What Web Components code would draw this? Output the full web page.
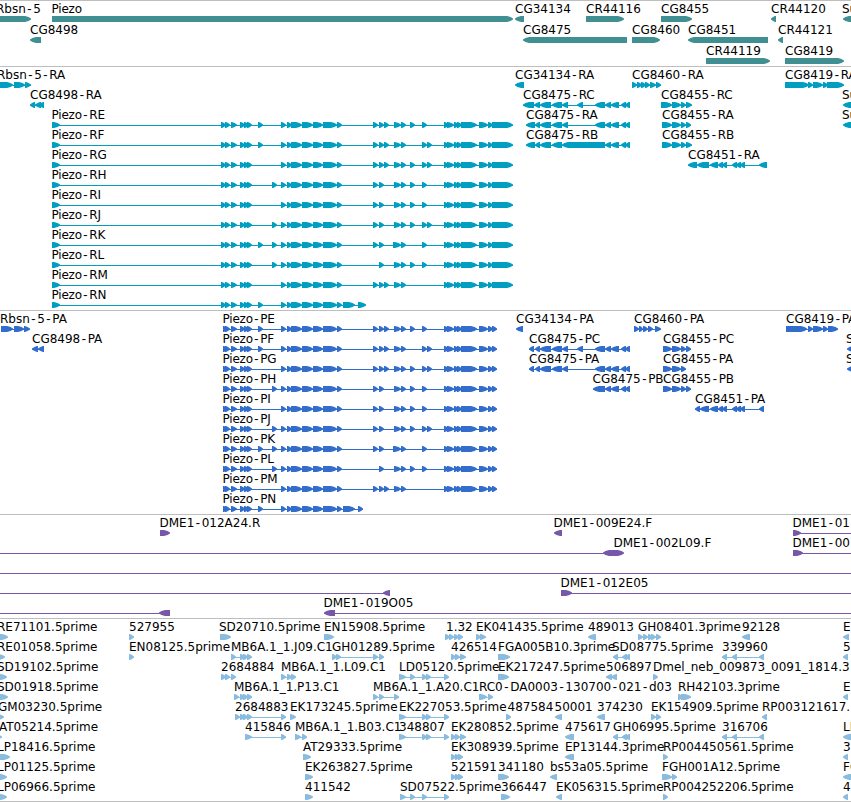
<!DOCTYPE html>
<html lang="en">
<head>
<meta charset="utf-8">
<title>Piezo region</title>
<style>
    body {
        margin: 0;
        background: #fff;
        color: #000;
        font-family: "DejaVu Sans", sans-serif;
        font-size: 12px;
    }
</style>
</head>
<body>
<genome-browser></genome-browser>

<script>
// Feature format: "label|x|strand exon exon ..."
// A strand of "-" draws the arrows to the left. "a~b" is a connector without an exon.

// Piezo isoforms share most exons, only the optional ones differ
const PIEZO_OPTIONAL = {
    E: '258-263 373-378 379-384 384-389 394-401 401-406 410-415 422-427',
    F: '258-263 373-378 379-384 384-389 394-401 401-406 422-427 427-432',
    G: '373-378 379-384 384-389 394-401 401-406 410-415 422-427 427-432',
    H: '272-277 373-378 379-384 394-401 401-406 410-415 422-427',
    I: '373-378 379-384 394-401 401-406 410-415 422-427',
    J: '272-277 373-378 379-384 394-401 401-406 410-415 422-427 427-432',
    K: '258-263 272-277 373-378 379-384 393-401 401-406 422-427',
    L: '272-277 379-384 394-401 401-406 410-415 422-427',
    M: '373-378 379-384 384-389 394-401 401-406',
    N: '258-263'
};

function piezo(kind, letter) {
    const first = kind === 'R' ? '52-60 221-226' : '223-228';
    const start = '225-230 231-237 240-245 244-249 247-252';
    const middle = '281-286 287-292 291-302 302-313 313-323 323-337 337-342';
    let end = '444-449 447-454 454-459 457-462 461-477 479-488 488-493 ' + (kind === 'R' ? '492-513' : '492-497');
    if (letter === 'N') {
        end = kind === 'R' ? '343-355 358-366' : '343-355 358-363';
    }
    return `Piezo-${kind}${letter}|${kind === 'R' ? 51.5 : 222.5}|+ ${first} ${start} ${middle} ${PIEZO_OPTIONAL[letter]} ${end}`;
}

const CG8475_LEFT = '540-551 552-562 562-568';
const CG8475_RIGHT = '605-611 611-619 621-626 625-630';
const CG8455 = '672-681 681-686';
const CG8451 = '710-718 718-723 722-727 732-737 736-741 740-745';

const TRACKS = [
    {
        color: '#3f8f93', rowHeight: 21, pad: 2,
        rows: [
            ['Rbsn-5|-4|+ -9-31', 'Piezo|51.5|+ 52-513', 'CG34134|515|- 515-524', 'CR44116|586|+ 586-624', 'CG8455|661|+ 661-692', 'CR44120|771|- 771-776', 'Su|842|- 843-865'],
            ['CG8498|30|- 30-41', 'CG8475|523|- 523-627', 'CG8460|632|+ 632-660', 'CG8451|688|- 688-768', 'CR44121|778|- 778-783'],
            ['CR44119|706|+ 706-770', 'CG8419|785|+ 785-844']
        ]
    },
    {
        color: '#009fc2', rowHeight: 20, pad: 3,
        rows: [
            ['Rbsn-5-RA|-3|+ -9-13 14-25 25-31', 'CG34134-RA|515|- 515-524', 'CG8460-RA|632|+ 632-637 637-642 641-646 645-650 650-656 656-661', 'CG8419-RA|785|+ 785-809 808-813 813-823 823-828 827-844'],
            ['CG8498-RA|30|- 30-35 35-41 39-44', `CG8475-RC|523|- 523-534 534-540 ${CG8475_LEFT} 577-583 595-605 ${CG8475_RIGHT}`, `CG8455-RC|661|+ 661-672 ${CG8455} 686-692`, 'Su|842|- 843-865'],
            [piezo('R', 'E'), `CG8475-RA|526|- 526-535 535-540 ${CG8475_LEFT} 595-605 ${CG8475_RIGHT}`, `CG8455-RA|662|+ 662-672 ${CG8455} 686-691`, 'Su|842|- 843-865'],
            [piezo('R', 'F'), `CG8475-RB|526|- 526-535 535-540 540-551 552-562 562-605 ${CG8475_RIGHT}`, `CG8455-RB|662|+ 662-672 ${CG8455} 686-692`],
            [piezo('R', 'G'), `CG8451-RA|688|- 688-697 697-709 ${CG8451} 759-767`],
            [piezo('R', 'H')],
            [piezo('R', 'I')],
            [piezo('R', 'J')],
            [piezo('R', 'K')],
            [piezo('R', 'L')],
            [piezo('R', 'M')],
            [piezo('R', 'N')]
        ]
    },
    {
        color: '#326dcb', rowHeight: 20, pad: 3,
        rows: [
            ['Rbsn-5-PA|0|+ 1-13 14-24 24-30', piezo('P', 'E'), 'CG34134-PA|516|- 516-523', 'CG8460-PA|634|+ 634-639 639-643 643-648 648-653 655-661', 'CG8419-PA|786|+ 786-807 808-813 813-823 823-828 828-838'],
            ['CG8498-PA|32|- 32-38 38-44', piezo('P', 'F'), `CG8475-PC|529|- 529-534 535-540 ${CG8475_LEFT} 577-583 595-605 ${CG8475_RIGHT}`, `CG8455-PC|663|+ 663-672 ${CG8455} 686-691`, 'S|846|- 847-865'],
            [piezo('P', 'G'), `CG8475-PA|529|- 529-534 535-540 ${CG8475_LEFT} 595-605 ${CG8475_RIGHT}`, `CG8455-PA|663|+ 663-672 ${CG8455}`, 'S|846|- 847-865'],
            [piezo('P', 'H'), `CG8475-PB|592.5|- 593-605 ${CG8475_RIGHT}`, `CG8455-PB|663|+ 663-672 ${CG8455} 686-691`],
            [piezo('P', 'I'), `CG8451-PA|695|- 695-700 700-709 ${CG8451} 759-764`],
            [piezo('P', 'J')],
            [piezo('P', 'K')],
            [piezo('P', 'L')],
            [piezo('P', 'M')],
            [piezo('P', 'N')]
        ]
    },
    {
        color: '#7758a8', rowHeight: 20, pad: 3,
        rows: [
            ['DME1-012A24.R|159.5|+ 160-170', 'DME1-009E24.F|553.5|- 554-562', 'DME1-01|792.5|+ 793-801 801~851'],
            ['|0|- 0~603 603-614', 'DME1-002L09.F|613.5|+ 612-624', 'DME1-00|792.5|+ 793-803 803~851'],
            ['|0|+ 0~851'],
            ['|0|- 0~390 383-390', 'DME1-012E05|560.5|+ 561-572 572~851'],
            ['|0|- 0~170 159-170', 'DME1-019O05|323.5|- 324-335 335~851']
        ]
    },
    {
        color: '#89bcde', rowHeight: 20, pad: 2,
        rows: [
            ['RE71101.5prime|-3|+ -9-8', '527955|129|+ 129-134', 'SD20710.5prime|219|+ 220-231', 'EN15908.5prime|324|+ 324-334', '1.32|446|+ 445-450 449-454 454-459 458-463', 'EK041435.5prime|476|+ 476-481 480-486', '489013|588|- 588-596', 'GH08401.3prime|638|+ 638-643 643-648 648-653 651-656 656-661', '92128|742|- 742-750', 'E|843|- 843-849'],
            ['RE01058.5prime|-3|+ -9-5', 'EN08125.5prime|129|+ 129-134', 'MB6A.1_1.J09.C1|231|+ 231-236 240-245 243-248 247-252', 'GH01289.5prime|332|+ 332-337 336-341 373-378 379-384', '426514|451|+ 451-456 455-460 460-466', 'FGA005B10.3prime|498|+ 498-510', 'SD08775.5prime|612|- 613-618 622-627 625-630', '339960|722|- 722-727 732-737 759-764', '5|843|- 843-848'],
            ['SD19102.5prime|-3|+ -9-7', '2684884|221|+ 221-226 225-230 231-236', 'MB6A.1_1.L09.C1|281|+ 281-286 287-292 291-296', 'LD05120.5prime|399|+ 399-406 410-415 422-427 426-431 444-449', 'EK217247.5prime|498|+ 498-509', '506897|606|- 606-612 611-617', 'Dmel_neb_009873_0091_1814.3|653|+ 653-658'],
            ['SD01918.5prime|-3|+ -9-8', 'MB6A.1_1.P13.C1|234|+ 234-239 240-245 243-248 247-252', 'MB6A.1_1.A20.C1|373|+ 373-378 379-384 394-399', 'RC0-DA0003-130700-021-d03|479|+ 479-487 488-493', 'RH42103.3prime|678|+ 678-683 681-691', 'E|843|- 843-848'],
            ['GM03230.5prime|-2|+ -9-4', '2684883|235|+ 235-240 240-245 243-248 247-252 281-286', 'EK173245.5prime|290|+ 290-296', 'EK227053.5prime|399|+ 399-406 422-427 426-431 444-449', '487584|507.5|+ 506-511', '50001|554.5|- 555-562', '374230|597|- 597-605', 'EK154909.5prime|651|+ 651-656 656-661', 'RP003121617.|762|- 762-767'],
            ['AT05214.5prime|-1|+ -4-2', '415846|245|+ 245-252 281-286', 'MB6A.1_1.B03.C1|295|+ 295-301 302-307', '348807|399|+ 399-406 422-427 426-431 444-449', 'EK280852.5prime|451|+ 451-456 455-460 460-466', '475617|565|- 565-574', 'GH06995.5prime|613|- 613-618 622-627 625-630', '316706|722|- 722-727 732-737 759-764', 'LI|843|- 843-865'],
            ['LP18416.5prime|-3|+ -9-10', 'AT29333.5prime|303|+ 303-311', 'EK308939.5prime|451|+ 451-456 455-460 458-463', 'EP13144.3prime|565|- 565-574', 'RP004450561.5prime|663|+ 663-668', '3|843|- 843-848'],
            ['LP01125.5prime|-3|+ -9-7', 'EK263827.5prime|305|+ 305-313', '521591|451|+ 451-456 455-460 458-463', '341180|498|+ 498-509', 'bs53a05.5prime|550|- 550-557', 'FGH001A12.5prime|662|+ 662-672 672-677', 'FG|843|- 843-865'],
            ['LP06966.5prime|-3|+ -9-7', '411542|305|+ 305-313', 'SD07522.5prime|400|+ 400-406 410-415 422-427 444-449', '366447|501|+ 501-510', 'EK056315.5prime|556|- 556-562', 'RP004252206.5prime|663|+ 663-668', '4|843|- 843-848']
        ]
    }
];

class FeatureRow extends HTMLElement {
    constructor() {
        super();
        this.attachShadow({ mode: 'open' });
    }

    set features(features) {
        this.shadowRoot.innerHTML = `
            <style>
                :host { display: block; }
                svg { display: block; width: 100%; height: 100%; overflow: visible; }
                text { fill: #000; }
                .dash { font-family: "Liberation Mono", monospace; letter-spacing: 0.2px; }
                .tight { letter-spacing: -0.2px; }
                .glyph { fill: var(--track-color); }
            </style>
            <svg>${features.map(f => this.feature(f)).join('')}</svg>
        `;
    }

    feature(source) {
        const [label, x, rest] = source.split('|');
        const [strand, ...parts] = rest.split(' ');
        const spans = parts.map(part => {
            const [, start, sep, end] = part.match(/^(-?\d+)([-~])(\d+)$/);
            return { start: +start, end: +end, exon: sep === '-' };
        });
        const from = Math.min(...spans.map(s => s.start));
        const to = Math.max(...spans.map(s => s.end));
        let out = '';
        if (spans.length > 1 || !spans[0].exon) {
            out += `<rect class="glyph" x="${from}" y="18" width="${to - from}" height="1"/>`;
        }
        spans.filter(s => s.exon).forEach(s => {
            out += `<path class="glyph" d="${this.arrow(s.start, s.end, strand)}"/>`;
        });
        if (label) {
            // the monospace hyphen is wider than the proportional one
            const text = label.replace(/-/g, '<tspan class="dash">-</tspan>');
            const tight = label.startsWith('Piezo') ? ' class="tight"' : '';
            out += `<text${tight} x="${x}" y="12">${text}</text>`;
        }
        return out;
    }

    arrow(start, end, strand) {
        const width = end - start;
        const small = width < 7;
        const head = small ? width - 1 : 6;
        // long exons have a blunter head
        const mid = small ? head / 2 : 2.5;
        if (strand === '-') {
            return `M${end} 15H${start + head}L${start + mid} 16L${start} 17.6V18.4L${start + mid} 20L${start + head} 21H${end}Z`;
        }
        return `M${start} 15H${end - head}L${end - mid} 16L${end} 17.6V18.4L${end - mid} 20L${end - head} 21H${start}Z`;
    }
}

customElements.define('feature-row', FeatureRow);

class GenomeTrack extends HTMLElement {
    constructor() {
        super();
        this.attachShadow({ mode: 'open' });
        this.shadowRoot.innerHTML = `
            <style>
                :host {
                    display: flex;
                    flex-direction: column;
                    border-top: 1px solid #bebebe;
                    padding-bottom: var(--track-pad);
                }
                ::slotted(feature-row) { height: var(--row-height); }
            </style>
            <slot></slot>
        `;
    }
}

customElements.define('genome-track', GenomeTrack);

class GenomeBrowser extends HTMLElement {
    constructor() {
        super();
        this.attachShadow({ mode: 'open' });
    }

    connectedCallback() {
        this.shadowRoot.innerHTML = `
            <style>
                :host {
                    display: block;
                    width: 851px;
                    overflow: hidden;
                    border-bottom: 1px solid #bebebe;
                }
            </style>
        `;
        TRACKS.forEach(data => {
            const track = document.createElement('genome-track');
            track.style.setProperty('--track-color', data.color);
            track.style.setProperty('--row-height', data.rowHeight + 'px');
            track.style.setProperty('--track-pad', data.pad + 'px');
            data.rows.forEach(features => {
                const row = document.createElement('feature-row');
                row.features = features;
                track.appendChild(row);
            });
            this.shadowRoot.appendChild(track);
        });
    }
}

customElements.define('genome-browser', GenomeBrowser);
</script>
</body>
</html>
